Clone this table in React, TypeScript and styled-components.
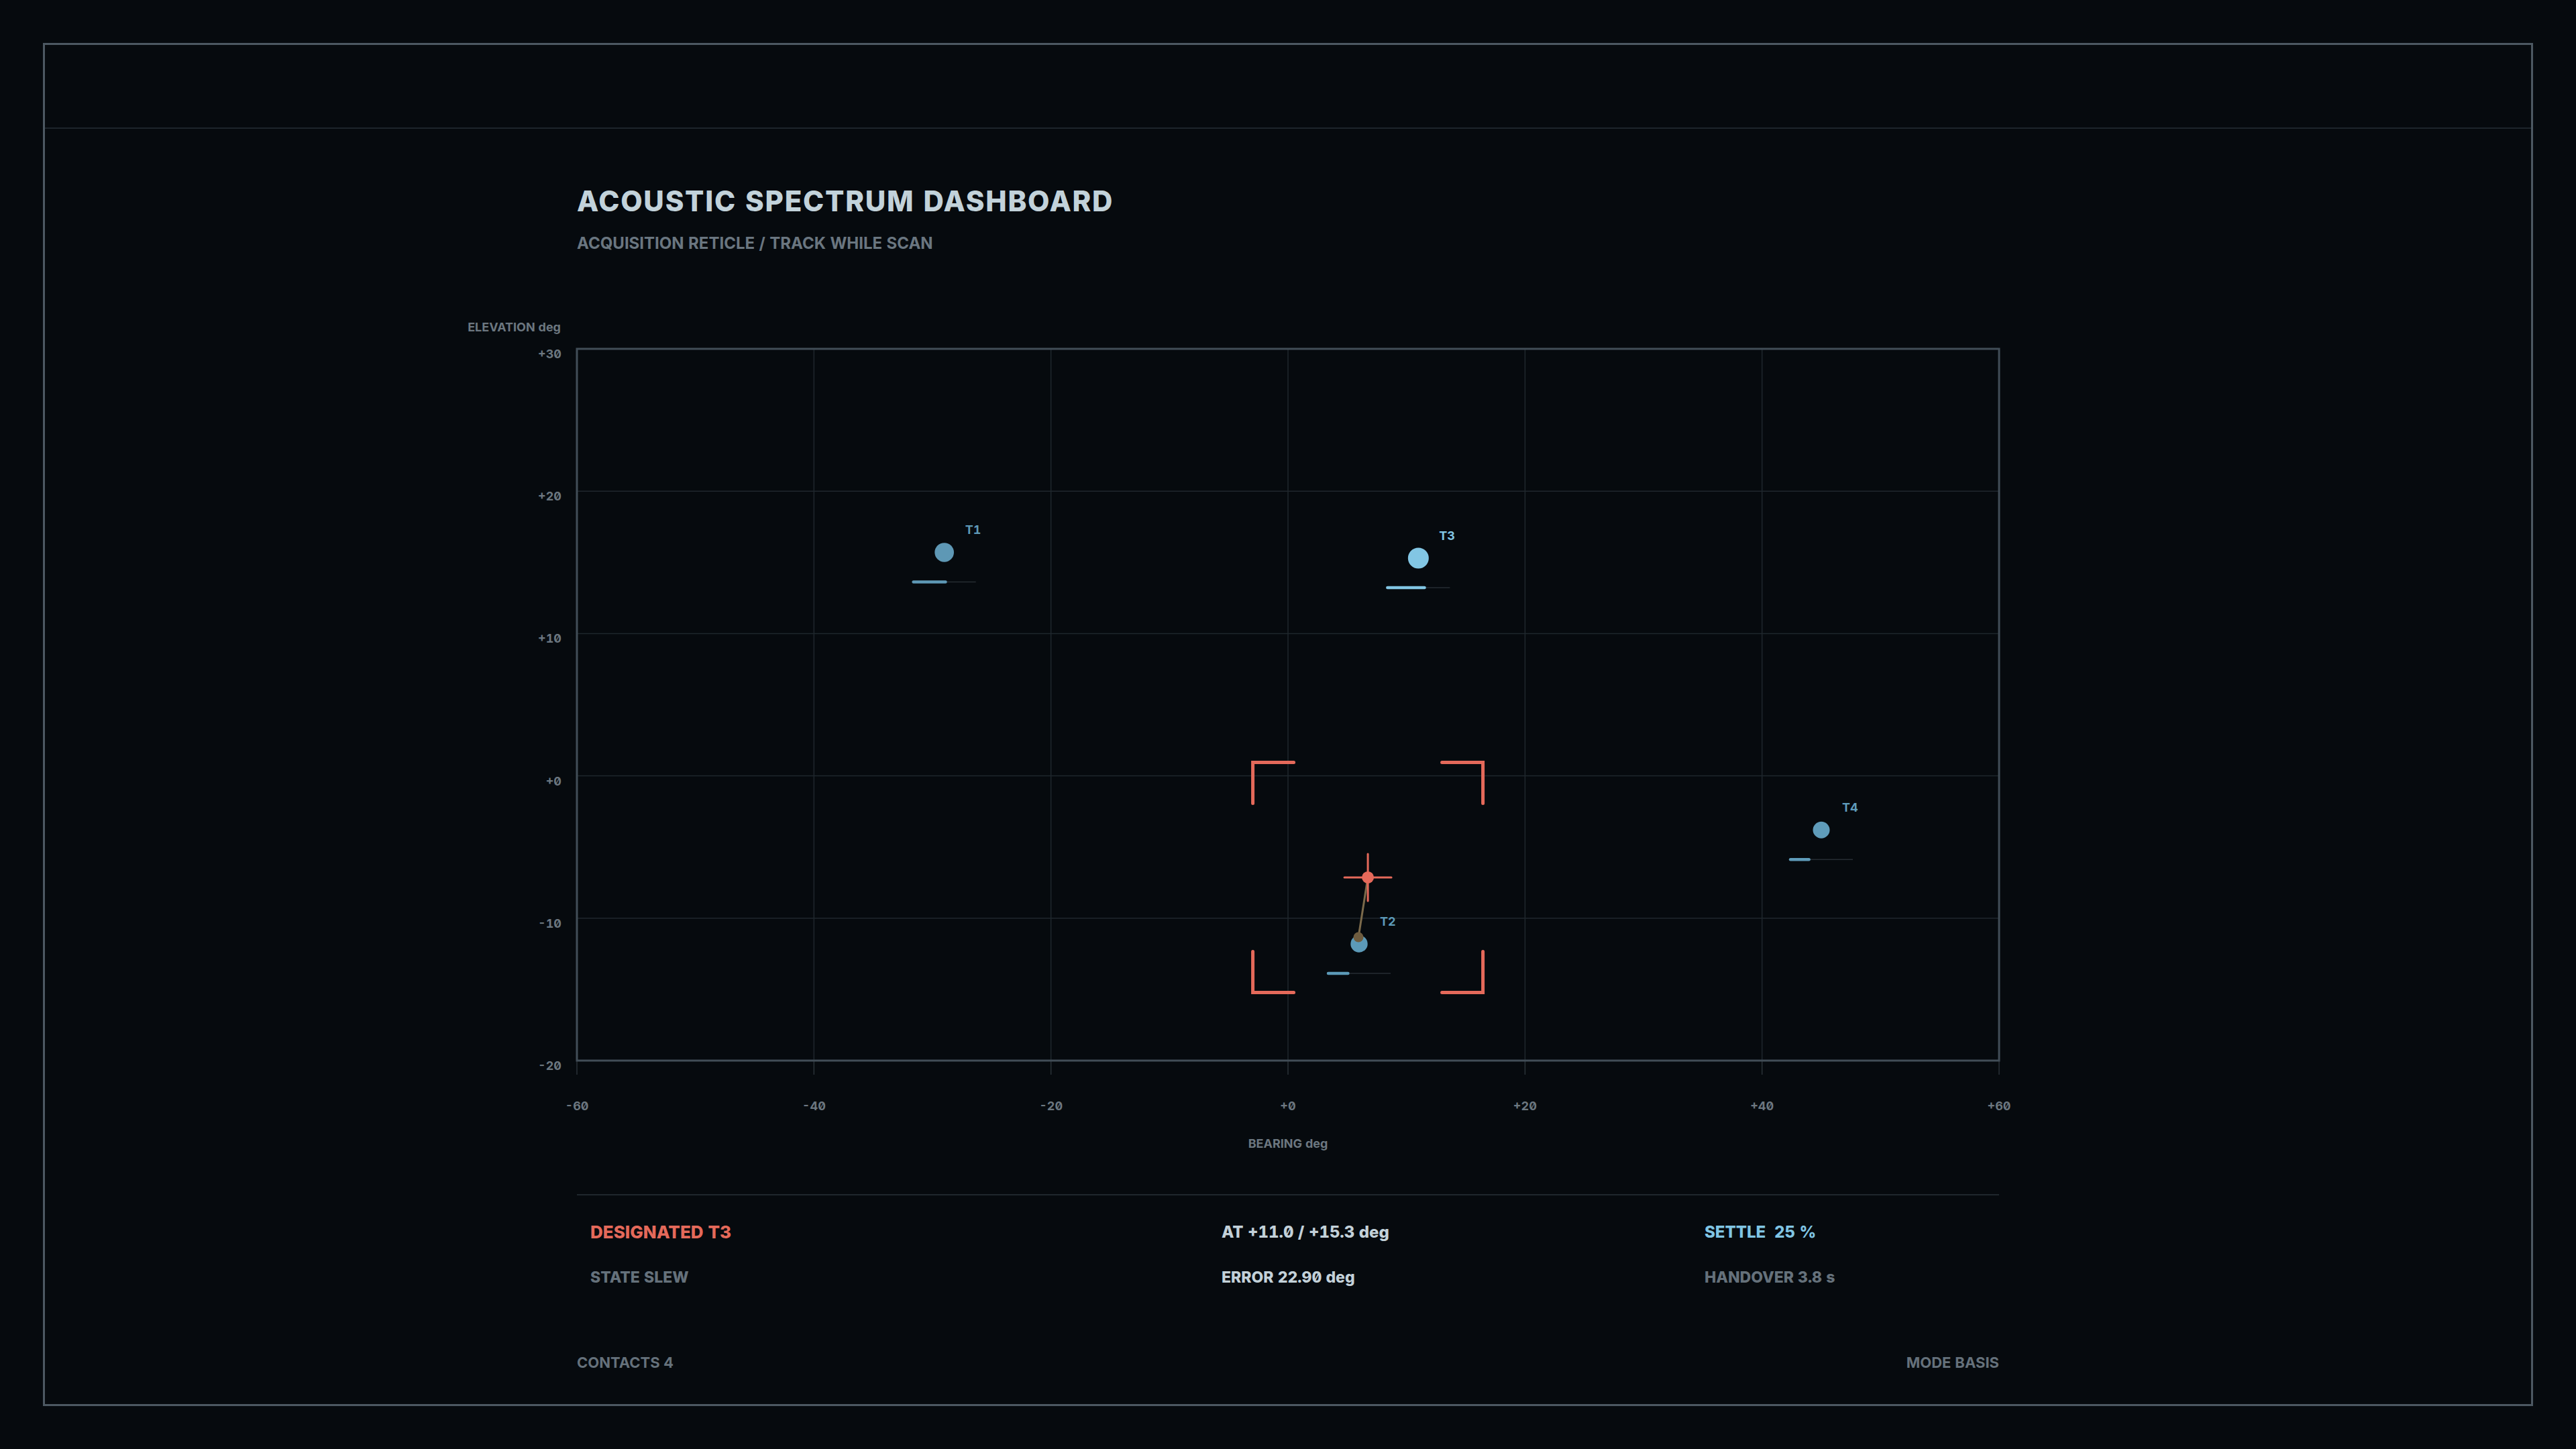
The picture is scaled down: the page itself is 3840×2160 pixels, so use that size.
import React from "react";
import styled, { createGlobalStyle } from "styled-components";

const GlobalStyle = createGlobalStyle`
  html, body {
    margin: 0;
    padding: 0;
    background: #060a0e;
  }
  body {
    font-family: Inter, "Noto Sans", "Liberation Sans", sans-serif;
    font-feature-settings: "zero" 1, "tnum" 1;
    color: #c3d1d9;
  }
  * { box-sizing: border-box; }
`;

const Page = styled.div`
  width: 3840px;
  height: 2160px;
  padding: 64px;
  background: #060a0e;
`;

const Frame = styled.div`
  width: 3712px;
  height: 2032px;
  border: 3px solid #4c5862;
  display: flex;
  flex-direction: column;
`;

const HeaderBar = styled.div`
  height: 125px;
  flex: none;
  border-bottom: 2px solid #1d252b;
`;

const Main = styled.main`
  width: 2120px;
  margin: 0 auto;
  padding-top: 83px;
  display: flex;
  flex-direction: column;
`;

const Title = styled.h1`
  margin: 0;
  font-size: 42px;
  line-height: 50px;
  font-weight: 800;
  letter-spacing: 1.75px;
  color: #c2d2da;
`;

const Subtitle = styled.div`
  margin-top: 23px;
  font-size: 24px;
  line-height: 30px;
  font-weight: 700;
  color: #6a7680;
`;

const ChartSvg = styled.svg`
  display: block;
  margin-top: 82px;
  overflow: visible;
  font-family: Inter, "Noto Sans", "Liberation Sans", sans-serif;
  font-feature-settings: "zero" 1, "tnum" 1;
`;

const Divider = styled.div`
  margin-top: 50px;
  height: 2px;
  background: #1f272d;
`;

const StatusGrid = styled.div`
  display: grid;
  grid-template-columns: 941px 720px 1fr;
  padding: 40px 20px 0;
`;

const StatusCell = styled.div`
  display: flex;
  flex-direction: column;
  gap: 38px;
`;

const Primary = styled.div<{ $tone: string; $wide?: boolean }>`
  font-size: ${(p) => (p.$wide ? "26px" : "24px")};
  line-height: 30px;
  font-weight: 800;
  white-space: pre;
  color: ${(p) => p.$tone};
`;

const Secondary = styled.div<{ $tone: string }>`
  font-size: 23px;
  line-height: 28px;
  font-weight: 800;
  white-space: pre;
  color: ${(p) => p.$tone};
`;

const FooterRow = styled.div`
  margin-top: 99px;
  display: flex;
  justify-content: space-between;
`;

const FooterText = styled.div`
  font-size: 22px;
  line-height: 28px;
  font-weight: 700;
  color: #65717b;
`;

const W = 2120;
const PLOT_TOP = 60;
const PLOT_H = 1061;
const bx = (b: number) => ((b + 60) / 120) * W;
const ey = (e: number) => PLOT_TOP + ((30 - e) / 50) * PLOT_H;

const bearings = [-60, -40, -20, 0, 20, 40, 60];
const elevations = [30, 20, 10, 0, -10, -20];
const fmt = (v: number) => (v > 0 ? `+${v}` : v === 0 ? "+0" : `${v}`);

type Contact = { id: string; b: number; e: number; r: number; fill: number; color: string };
const contacts: Contact[] = [
  { id: "T1", b: -29.0, e: 15.7, r: 14.3, fill: 0.52, color: "#5e98b5" },
  { id: "T2", b: 6.0, e: -11.8, r: 12.7, fill: 0.32, color: "#5c9ab8" },
  { id: "T3", b: 11.0, e: 15.3, r: 15.5, fill: 0.6, color: "#82c6e4" },
  { id: "T4", b: 45.0, e: -3.8, r: 12.5, fill: 0.3, color: "#5f9cba" },
];

const RED = "#e4695a";

function Chart() {
  const rx = bx(6.74);
  const ry = ey(-7.13);
  const half = 171.5;
  const arm = 61;
  const trailX = 1165;
  const trailY = 937;
  const corners = [
    [-1, -1],
    [1, -1],
    [-1, 1],
    [1, 1],
  ];
  return (
    <ChartSvg width={W} height={1270} viewBox={`0 0 ${W} 1270`}>
      <text x={-24} y={34} textAnchor="end" fontSize={18} fontWeight={700} fill="#6c7780">
        ELEVATION deg
      </text>
      {bearings.slice(1, -1).map((b) => (
        <line key={`v${b}`} x1={bx(b)} x2={bx(b)} y1={PLOT_TOP} y2={PLOT_TOP + PLOT_H} stroke="#1f272d" strokeWidth={1.5} />
      ))}
      {elevations.slice(1, -1).map((e) => (
        <line key={`h${e}`} x1={0} x2={W} y1={ey(e)} y2={ey(e)} stroke="#1f272d" strokeWidth={1.5} />
      ))}
      {bearings.map((b) => (
        <line key={`t${b}`} x1={bx(b)} x2={bx(b)} y1={PLOT_TOP + PLOT_H} y2={PLOT_TOP + PLOT_H + 21} stroke="#2a3238" strokeWidth={1.5} />
      ))}
      <rect x={0} y={PLOT_TOP} width={W} height={PLOT_H} fill="none" stroke="#414d57" strokeWidth={3} />
      {elevations.map((e) => (
        <text key={`el${e}`} x={-23} y={ey(e) + 14} textAnchor="end" fontSize={18} fontWeight={700} fill="#6c7780">
          {fmt(e)}
        </text>
      ))}
      {bearings.map((b) => (
        <text key={`bl${b}`} x={bx(b)} y={1195} textAnchor="middle" fontSize={18} fontWeight={700} fill="#6c7780">
          {fmt(b)}
        </text>
      ))}
      <text x={W / 2} y={1251} textAnchor="middle" fontSize={18} fontWeight={700} fill="#6c7780">
        BEARING deg
      </text>

      {contacts.map((c) => {
        const x = bx(c.b);
        const y = ey(c.e);
        return (
          <g key={c.id}>
            <line x1={x - 47} x2={x + 47} y1={y + 44} y2={y + 44} stroke="#262d33" strokeWidth={1.5} />
            <line x1={x - 46} x2={x - 46 + c.fill * 92} y1={y + 44} y2={y + 44} stroke={c.color} strokeWidth={4.5} strokeLinecap="round" />
            <circle cx={x} cy={y} r={c.r} fill={c.color} />
            <text x={x + 31} y={y - 27} fontSize={18} fontWeight={700} fill={c.color}>
              {c.id}
            </text>
          </g>
        );
      })}

      <line x1={trailX} y1={trailY} x2={rx} y2={ry} stroke="#7b6a4b" strokeWidth={3} />
      <circle cx={trailX} cy={trailY} r={7.5} fill="#6e5c3f" />

      {corners.map(([sx, sy], i) => {
        const cx = rx + sx * half;
        const cy = ry + sy * half;
        return (
          <path
            key={i}
            d={`M ${cx - sx * arm} ${cy} L ${cx} ${cy} L ${cx} ${cy - sy * arm}`}
            fill="none"
            stroke={RED}
            strokeWidth={5}
            strokeLinejoin="miter"
            strokeLinecap="round"
          />
        );
      })}
      <line x1={rx - 35} x2={rx + 35} y1={ry} y2={ry} stroke={RED} strokeWidth={3} strokeLinecap="round" />
      <line x1={rx} x2={rx} y1={ry - 35} y2={ry + 35} stroke={RED} strokeWidth={3} strokeLinecap="round" />
      <circle cx={rx} cy={ry} r={9} fill={RED} />
    </ChartSvg>
  );
}

export default function App() {
  return (
    <>
      <GlobalStyle />
      <Page>
        <Frame>
          <HeaderBar />
          <Main>
            <Title>ACOUSTIC SPECTRUM DASHBOARD</Title>
            <Subtitle>ACQUISITION RETICLE / TRACK WHILE SCAN</Subtitle>
            <Chart />
            <Divider />
            <StatusGrid>
              <StatusCell>
                <Primary $tone="#e4695a" $wide>DESIGNATED T3</Primary>
                <Secondary $tone="#65717b">STATE SLEW</Secondary>
              </StatusCell>
              <StatusCell>
                <Primary $tone="#c3d1d9">AT +11.0 / +15.3 deg</Primary>
                <Secondary $tone="#c3d1d9">ERROR 22.90 deg</Secondary>
              </StatusCell>
              <StatusCell>
                <Primary $tone="#80c5e4">{"SETTLE  25 %"}</Primary>
                <Secondary $tone="#65717b">HANDOVER 3.8 s</Secondary>
              </StatusCell>
            </StatusGrid>
            <FooterRow>
              <FooterText>CONTACTS 4</FooterText>
              <FooterText>MODE BASIS</FooterText>
            </FooterRow>
          </Main>
        </Frame>
      </Page>
    </>
  );
}
